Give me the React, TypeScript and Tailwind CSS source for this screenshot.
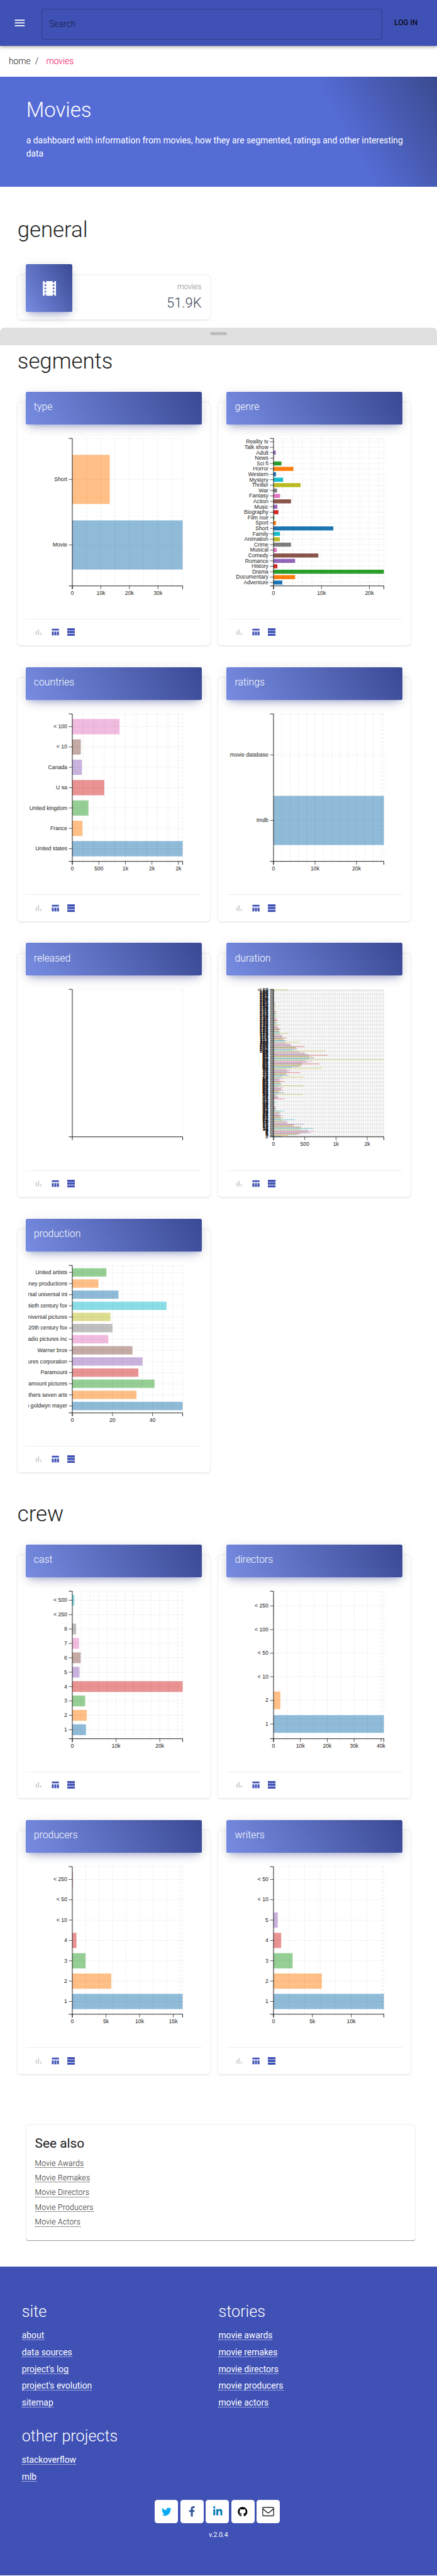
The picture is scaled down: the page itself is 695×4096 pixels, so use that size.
import React from "react";
import { FaTwitter, FaFacebookF, FaLinkedinIn, FaGithub } from "react-icons/fa";

const PALETTE = [
  "#1f77b4", "#ff7f0e", "#2ca02c", "#d62728", "#9467bd",
  "#8c564b", "#e377c2", "#7f7f7f", "#bcbd22", "#17becf",
];

const PLOT_W = 202;
const PLOT_H = 270;
const AXIS_X = 80.6;
const AXIS_Y = 25.5;

type Bar = [label: string, width: number];

interface ChartSpec {
  title: string;
  /** Categories listed from the bottom of the chart to the top. */
  bars: Bar[];
  /** Distance between two vertical grid lines. */
  grid?: number;
  /** Distance between two labelled ticks. */
  tick?: number;
  tickLabels?: string[];
  solid?: boolean;
}

const DURATION_WIDTHS = [
  14, 27, 43, 49, 68, 63, 74, 63, 48, 73, 50, 50, 37, 37, 56, 25, 26, 24, 18, 39,
  13, 18, 13, 12, 17, 11, 10, 13, 10, 20, 4, 4, 4, 3, 5, 1, 1, 2, 1, 6,
  1, 0, 0, 20, 8, 8, 9, 5, 54, 8, 19, 11, 9, 17, 13, 14, 18, 9, 56, 13,
  14, 14, 11, 20, 12, 11, 18, 12, 56, 16, 28, 22, 23, 49, 29, 25, 32, 24, 89, 33,
  47, 51, 52, 84, 53, 61, 71, 58, 202, 65, 74, 72, 65, 99, 63, 57, 57, 47, 95, 35,
  43, 42, 41, 57, 33, 32, 30, 23, 47, 20, 23, 19, 18, 24, 15, 16, 16, 12, 28, 11,
  11, 11, 10, 13, 10, 8, 7, 6, 11, 3, 7, 5, 4, 8, 5, 5, 4, 3, 7, 3,
  4, 4, 4, 5, 2, 2, 2, 1, 5, 1, 3, 1, 2, 3, 1, 1, 1, 1, 3, 1,
  1, 0, 1, 1, 0, 1, 1, 2, 26,
];

const SEGMENTS: ChartSpec[] = [
  {
    title: "type",
    bars: [["Movie", 202], ["Short", 68.5]],
    grid: 26.1,
    tick: 52.3,
    tickLabels: ["0", "10k", "20k", "30k"],
  },
  {
    title: "genre",
    bars: [
      ["Adventure", 16], ["Documentary", 39.5], ["Drama", 202], ["History", 7],
      ["Romance", 39.5], ["Comedy", 82], ["Musical", 6], ["Crime", 32],
      ["Animation", 11.5], ["Family", 11.8], ["Short", 109.5], ["Sport", 4.5],
      ["Film noir", 1.5], ["Biography", 9], ["Music", 7], ["Action", 32],
      ["Fantasy", 12], ["War", 6.5], ["Thriller", 49.5], ["Mystery", 17.5],
      ["Western", 4.5], ["Horror", 36.5], ["Sci fi", 14.5], ["News", 0.4],
      ["Adult", 4], ["Talk show", 0], ["Reality tv", 0],
    ],
    grid: 17.56,
    tick: 87.8,
    tickLabels: ["0", "10k", "20k"],
    solid: true,
  },
  {
    title: "countries",
    bars: [
      ["United states", 202], ["France", 18.5], ["United kingdom", 29.5], ["U sa", 58.5],
      ["Canada", 17.5], ["< 10", 15.5], ["< 100", 86.5],
    ],
    grid: 19.45,
    tick: 48.6,
    tickLabels: ["0", "500", "1k", "2k", "2k"],
  },
  {
    title: "ratings",
    bars: [["Imdb", 202], ["movie database", 0]],
    grid: 15.2,
    tick: 76,
    tickLabels: ["0", "10k", "20k"],
  },
  { title: "released", bars: [] },
  {
    title: "duration",
    bars: DURATION_WIDTHS.map((w, i): Bar => [i === 168 ? "< 10" : String(i + 2), w]),
    grid: 2.29,
    tick: 57.2,
    tickLabels: ["0", "500", "1k", "2k"],
  },
  {
    title: "production",
    bars: [
      ["Metro goldwyn mayer", 202], ["Warner brothers seven arts", 117.5],
      ["Paramount pictures", 150.5], ["Paramount", 121],
      ["Columbia pictures corporation", 128.5], ["Warner bros", 110],
      ["Rko radio pictures inc", 66], ["20th century fox", 73.5],
      ["Universal pictures", 69.8], ["Twentieth century fox", 172.5],
      ["Universal universal int", 84.5], ["Walt disney productions", 47.7],
      ["United artists", 62.4],
    ],
    grid: 18.36,
    tick: 73.45,
    tickLabels: ["0", "20", "40"],
  },
];

const CREW: ChartSpec[] = [
  {
    title: "cast",
    bars: [
      ["1", 25], ["2", 26.5], ["3", 23.5], ["4", 202], ["5", 13.2],
      ["6", 15.3], ["7", 12.3], ["8", 7], ["< 250", 0], ["< 500", 3.8],
    ],
    grid: 16.02,
    tick: 80.1,
    tickLabels: ["0", "10k", "20k"],
  },
  {
    title: "directors",
    bars: [["1", 202], ["2", 12.5], ["< 10", 0.3], ["< 50", 0], ["< 100", 0], ["< 250", 0.4]],
    grid: 24.6,
    tick: 49.2,
    tickLabels: ["0", "10k", "20k", "30k", "40k"],
  },
  {
    title: "producers",
    bars: [["1", 202], ["2", 71.3], ["3", 24.2], ["4", 7.7], ["< 10", 0], ["< 50", 0], ["< 250", 1.3]],
    grid: 24.63,
    tick: 61.6,
    tickLabels: ["0", "5k", "10k", "15k"],
  },
  {
    title: "writers",
    bars: [["1", 202], ["2", 88.5], ["3", 35], ["4", 14], ["5", 7.8], ["< 10", 0], ["< 50", 0]],
    grid: 28.46,
    tick: 71.15,
    tickLabels: ["0", "5k", "10k"],
  },
];

function BarChart({ bars, grid, tick, tickLabels = [], solid }: ChartSpec) {
  const step = PLOT_H / (bars.length + 0.25);
  const centre = (i: number) => PLOT_H - (i + 0.625) * step;
  const gridLines: number[] = [];
  if (grid) for (let x = grid; x < PLOT_W - 0.5; x += grid) gridLines.push(x);

  return (
    <svg width="317" height="356" className="ml-5 block overflow-hidden">
      <g transform={`translate(${AXIS_X} ${AXIS_Y})`}>
        {bars.map(([, width], i) => (
          <rect
            key={i}
            x={0}
            y={centre(i) - step * 0.375}
            width={width}
            height={step * 0.75}
            fill={PALETTE[i % 10]}
            fillOpacity={solid ? 1 : 0.5}
          />
        ))}
        <g stroke="#000000" strokeOpacity={0.1} strokeDasharray="2 2">
          {gridLines.map((x, i) => (
            <line key={i} x1={x} x2={x} y1={PLOT_H} y2={0} strokeDasharray="4 3" />
          ))}
          {bars.map((_, i) => (
            <line key={i} x1={0} x2={PLOT_W} y1={centre(i)} y2={centre(i)} />
          ))}
          <line x1={0} x2={PLOT_W} y1={0} y2={0} />
          <line x1={PLOT_W} x2={PLOT_W} y1={PLOT_H} y2={0} strokeDasharray="4 3" />
        </g>
        <path d={`M-6.5 0H0V${PLOT_H}H-6.5M0 ${PLOT_H + 6}V${PLOT_H}H${PLOT_W}V${PLOT_H + 6}`} fill="none" stroke="#000" />
        <g className="fill-[#1c1c1c] text-[10px] font-[Liberation_Sans,Arial,sans-serif]">
          {bars.map(([label], i) => (
            <g key={i}>
              <line x1={-6.5} x2={0} y1={centre(i)} y2={centre(i)} stroke="#000" strokeOpacity={0.75} />
              <text x={-9.3} y={centre(i) + 3.2} textAnchor="end">{label}</text>
            </g>
          ))}
          {tickLabels.map((label, i) => (
            <g key={i}>
              <line x1={i * (tick ?? 0)} x2={i * (tick ?? 0)} y1={PLOT_H} y2={PLOT_H + 6} stroke="#000" strokeOpacity={0.75} />
              <text x={i * (tick ?? 0)} y={PLOT_H + 16} textAnchor="middle">{label}</text>
            </g>
          ))}
        </g>
      </g>
    </svg>
  );
}

const HEADER_STYLE =
  "rounded-[3px] bg-[linear-gradient(60deg,#778ce2,#3a4994)] shadow-[0_12px_20px_-10px_rgba(63,81,181,0.28),0_4px_20px_0_rgba(0,0,0,0.12),0_7px_8px_-5px_rgba(63,81,181,0.2)]";

function CardActions() {
  return (
    <div className="mx-[15px] flex h-12 items-center border-t border-[#eeeeee] pl-[17px]">
      <svg width="12" height="14" viewBox="0 0 12 14" fill="#c9c9cf">
        <rect x="1" y="5" width="2" height="7" />
        <rect x="5" y="2" width="2" height="10" />
        <rect x="9" y="8" width="2" height="4" />
      </svg>
      <svg width="14" height="14" viewBox="0 0 14 14" fill="#3f51b5" className="ml-[18px]">
        <path d="M1.2 1H12.8Q13.5 1 13.5 1.7V4H.5V1.7Q.5 1 1.2 1Z" />
        <path d="M.5 6H4V13H1.2Q.5 13 .5 12.3ZM5.2 6H8.8V13H5.2ZM10 6H13.5V12.3Q13.5 13 12.8 13H10Z" />
      </svg>
      <svg width="14" height="14" viewBox="0 0 14 14" fill="#3f51b5" className="ml-[15px]">
        <path d="M0 0H14V4H0ZM0 5H14V9H0ZM0 10H14V14H0Z" />
      </svg>
    </div>
  );
}

function ChartCard(spec: ChartSpec) {
  return (
    <section className="h-[444.7px] w-88 rounded-md bg-white shadow-[0_1px_4px_0_rgba(0,0,0,0.14)]">
      <div className={`${HEADER_STYLE} relative -top-5 mx-[15px] -mb-5 h-15 px-[15px] pt-[15.4px]`}>
        <h4 className="text-[18.2px] leading-[25px] font-light text-white">{spec.title}</h4>
      </div>
      <BarChart {...spec} />
      <CardActions />
    </section>
  );
}

function ChartSection({ title, charts }: { title: string; charts: ChartSpec[] }) {
  return (
    <div className="px-8 pt-px">
      <h2 className="text-[40px] leading-12 font-light text-[#212121]">{title}</h2>
      <div className="mt-[50.6px] grid grid-cols-[352px_352px] gap-x-4 gap-y-15">
        {charts.map((c) => (
          <ChartCard key={c.title} {...c} />
        ))}
      </div>
    </div>
  );
}

function FooterList({ title, items }: { title: string; items: string[] }) {
  return (
    <div>
      <h3 className="text-[29px] leading-9 font-light">{title}</h3>
      <ul className="mt-2.5">
        {items.map((item) => (
          <li key={item} className="flex h-[31px] items-center">
            <a className="inline-block border-b border-dotted border-white text-base leading-[15px]">{item}</a>
          </li>
        ))}
      </ul>
    </div>
  );
}

const SOCIAL_BUTTON = "flex h-[43px] w-[42.6px] items-center justify-center rounded-[5px] bg-white";

export default function App() {
  return (
    <div className="w-full bg-white font-[Roboto,sans-serif] [zoom:0.8686]">
      <header className="relative flex h-21 items-center bg-[#3f51b5] shadow-[0_2px_4px_-1px_rgba(0,0,0,0.2),0_4px_5px_0_rgba(0,0,0,0.14),0_1px_10px_0_rgba(0,0,0,0.12)]">
        <svg width="24" height="24" viewBox="0 0 24 24" fill="#fff" className="ml-6">
          <path d="M3 18h18v-2H3v2zm0-5h18v-2H3v2zm0-7v2h18V6H3z" />
        </svg>
        <div className="mt-1 ml-7 flex h-14 w-[624px] items-center rounded border border-black/23 px-[13px] text-base font-light text-black/70">
          Search
        </div>
        <span className="ml-[22px] text-[13.7px] font-medium text-black/87">LOG IN</span>
      </header>

      <nav className="flex h-[57px] px-4 pt-[16.5px] text-base leading-6 font-light text-[#212121]">
        <span>home</span>
        <span className="ml-2">/</span>
        <span className="ml-3.5 text-[#f50057]">movies</span>
      </nav>

      <div className="h-[201px] bg-[linear-gradient(60deg,#556cd6_75%,#3a4a8f)] px-12 pt-[38.7px] text-white">
        <h1 className="text-[38px] leading-11 font-light">Movies</h1>
        <p className="mt-[22px] text-base leading-6">
          a dashboard with information from movies, how they are segmented, ratings and other interesting data
        </p>
      </div>

      <div className="px-8 pt-[55px]">
        <h2 className="text-[40px] leading-12 font-light text-[#212121]">general</h2>
        <div className="mt-[59px] flex h-[81px] w-88 justify-between rounded-md bg-white px-[15px] shadow-[0_1px_4px_0_rgba(0,0,0,0.14)]">
          <div className={`${HEADER_STYLE} -mt-5 flex h-[87px] w-[86px] items-center justify-center`}>
            <svg width="36" height="36" viewBox="0 0 24 24" fill="#fff">
              <path d="M18 3v2h-2V3H8v2H6V3H4v18h2v-2h2v2h8v-2h2v2h2V3h-2zM8 17H6v-2h2v2zm0-4H6v-2h2v2zm0-4H6V7h2v2zm10 8h-2v-2h2v2zm0-4h-2v-2h2v2zm0-4h-2V7h2v2z" />
            </svg>
          </div>
          <div className="pt-[11px] text-right font-light">
            <p className="text-sm leading-[21px] text-[#888888]">movies</p>
            <p className="text-[25.2px] leading-9 text-[#3c4858]">51.9K</p>
          </div>
        </div>
      </div>

      <div className="mt-[15px] mb-[5.3px] flex h-8 justify-center rounded-t-lg bg-[#e0e0e0] pt-2">
        <div className="h-1.5 w-[30px] rounded-[3px] bg-[#bdbdbd]" />
      </div>

      <ChartSection title="segments" charts={SEGMENTS} />
      <div className="h-[52px]" />
      <ChartSection title="crew" charts={CREW} />

      <aside className="mt-[93.6px] ml-12 h-[211px] w-[712px] rounded-[4px] bg-white px-4 pt-[18.7px] shadow-[0_2px_1px_-1px_rgba(0,0,0,0.2),0_1px_1px_0_rgba(0,0,0,0.14),0_1px_3px_0_rgba(0,0,0,0.12)]">
        <h3 className="text-2xl leading-8 text-[#212121]">See also</h3>
        <ul className="mt-[7px]">
          {["Movie Awards", "Movie Remakes", "Movie Directors", "Movie Producers", "Movie Actors"].map((item) => (
            <li key={item} className="flex h-[27px] items-center">
              <a className="inline-block border-b border-dotted border-[#212121] text-sm leading-[13px] font-light tracking-[0.27px] text-[#212121]">
                {item}
              </a>
            </li>
          ))}
        </ul>
      </aside>

      <footer className="mt-12 h-[566px] bg-[#3f51b5] px-10 pt-[65px] text-white">
        <div className="grid grid-cols-[360px_360px] gap-y-[27px]">
          <FooterList title="site" items={["about", "data sources", "project's log", "project's evolution", "sitemap"]} />
          <FooterList
            title="stories"
            items={["movie awards", "movie remakes", "movie directors", "movie producers", "movie actors"]}
          />
          <FooterList title="other projects" items={["stackoverflow", "mlb"]} />
        </div>
        <div className="mt-[26px] -ml-1 flex justify-center gap-1">
          <a className={SOCIAL_BUTTON}><FaTwitter size={18} color="#03a9f4" /></a>
          <a className={SOCIAL_BUTTON}><FaFacebookF size={19} color="#3b5998" /></a>
          <a className={SOCIAL_BUTTON}><FaLinkedinIn size={19} color="#0077b5" /></a>
          <a className={SOCIAL_BUTTON}><FaGithub size={18} color="#000" /></a>
          <a className={SOCIAL_BUTTON}>
            <svg width="22" height="18" viewBox="0 0 22 18" fill="none" stroke="#000" strokeWidth="1.3">
              <rect x="1" y="1" width="20" height="15.6" rx="1.5" />
              <path d="M1 3.5L9.6 10.7Q11 11.8 12.4 10.7L21 3.5" />
            </svg>
          </a>
        </div>
        <p className="mt-[13px] text-center text-xs leading-[18px]">v.2.0.4</p>
      </footer>
    </div>
  );
}
